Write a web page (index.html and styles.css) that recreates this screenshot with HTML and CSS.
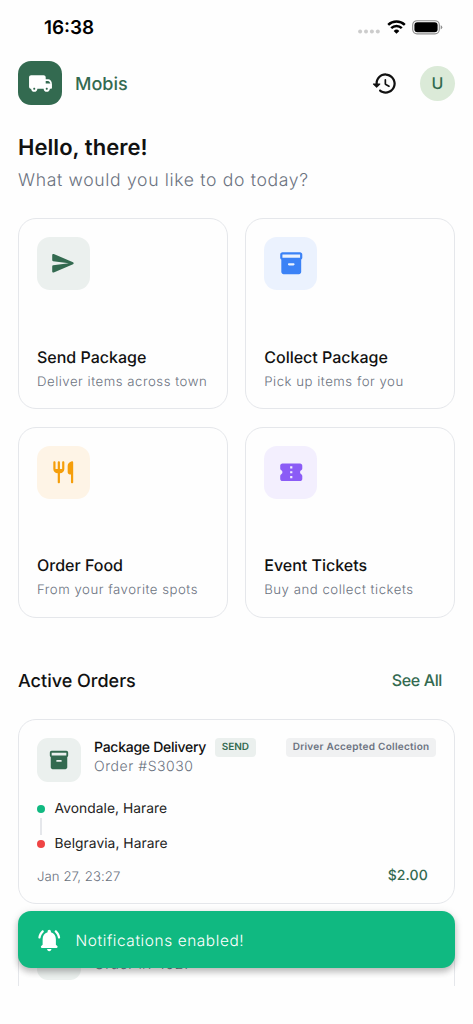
FILE: index.html
```html
<!DOCTYPE html>
<html lang="en">
<head>
<meta charset="utf-8">
<title>Mobis</title>
<link rel="stylesheet" href="styles.css">
</head>
<body>
<svg class="defs" width="0" height="0">
  <symbol id="box" viewBox="0 0 24 24"><path d="M20 2H4c-1 0-2 .9-2 2v3.01c0 .72.43 1.34 1 1.69V20c0 1.1 1.1 2 2 2h14c.9 0 2-.9 2-2V8.7c.57-.35 1-.97 1-1.69V4c0-1.1-1-2-2-2zm-6 12h-4c-.55 0-1-.45-1-1s.45-1 1-1h4c.55 0 1 .45 1 1s-.45 1-1 1zm6-7H4V4h16v3z"/></symbol>
</svg>
<div class="screen">
  <div class="statusbar">
    <span class="clock">16:38</span>
    <div class="indicators">
      <svg class="signal" width="22" height="5" viewBox="0 0 22 5"><circle cx="2.1" cy="2.5" r="2"/><circle cx="8" cy="2.5" r="2"/><circle cx="13.9" cy="2.5" r="2"/><circle cx="19.8" cy="2.5" r="2"/></svg>
      <svg class="wifi" width="19" height="14.2" viewBox="0 0 20 15" fill="none" stroke="#000" stroke-width="2.6"><path class="arc" d="M1.2 5.2a12.6 12.6 0 0 1 17.6 0"/><path class="arc" d="M4.4 8.6a8 8 0 0 1 11.2 0"/><path d="M10 14.6l-3-3.1a4.3 4.3 0 0 1 6 0z" fill="#000" stroke="none"/></svg>
      <svg class="battery" width="31" height="15" viewBox="0 0 31 15"><rect x=".7" y=".7" width="26.6" height="13.2" rx="4.3" class="arc" stroke="#8e8e8e" stroke-width="1.1"/><rect x="2.4" y="2.3" width="23.2" height="10" rx="3" fill="#000"/><path d="M28.7 5.2q1.6.6 1.6 2.1t-1.6 2.1z" fill="#8e8e8e"/></svg>
    </div>
  </div>

  <header class="topbar">
    <div class="logo"><svg width="25" height="25" viewBox="0 0 24 24"><path d="M19.5 8H17V6c0-1.1-.9-2-2-2H3c-1.1 0-2 .9-2 2v9c0 1.1.9 2 2 2 0 1.66 1.34 3 3 3s3-1.34 3-3h6c0 1.66 1.34 3 3 3s3-1.34 3-3h1c.55 0 1-.45 1-1v-3.33c0-3-2-4.67-3.5-4.67zM6 18c-.55 0-1-.45-1-1s.45-1 1-1 1 .45 1 1-.45 1-1 1zm13.2-8.5c1 0 1.8 1.1 2.26 2.5H17V9.5h2.2zM18 18c-.55 0-1-.45-1-1s.45-1 1-1 1 .45 1 1-.45 1-1 1z"/></svg></div>
    <span class="brand">Mobis</span>
    <svg class="history" width="27" height="27" viewBox="0 0 24 24"><path d="M13.26 3C8.17 2.86 4 6.95 4 12H2.21c-.45 0-.67.54-.35.85l2.79 2.8c.2.2.51.2.71 0l2.79-2.8c.31-.31.09-.85-.36-.85H6c0-3.9 3.18-7.05 7.1-7 3.72.05 6.85 3.18 6.9 6.9.05 3.91-3.1 7.1-7 7.1-1.61 0-3.1-.55-4.28-1.48-.4-.31-.96-.28-1.32.08-.42.43-.39 1.13.08 1.5C9 20.29 10.91 21 13 21c5.05 0 9.14-4.17 9-9.26-.13-4.69-4.05-8.61-8.74-8.74zm-.51 5c-.41 0-.75.34-.75.75v3.68c0 .35.19.68.49.86l3.12 1.85c.36.21.82.09 1.03-.26.21-.36.09-.82-.26-1.03l-2.88-1.71v-3.4c0-.4-.34-.74-.75-.74z"/></svg>
    <div class="avatar">U</div>
  </header>

  <section class="greeting">
    <h1>Hello, there!</h1>
    <p>What would you like to do today?</p>
  </section>

  <section class="services">
    <article class="service send">
      <div class="tile"><svg width="26.5" height="26.5" viewBox="0 0 24 24"><path d="M3.4 20.4l17.45-7.48c.81-.35.81-1.49 0-1.84L3.4 3.6c-.66-.29-1.39.2-1.39.91L2 9.12c0 .5.37.93.87.99L17 12 2.87 13.88c-.5.07-.87.5-.87 1l.01 4.61c0 .71.73 1.2 1.39.91z"/></svg></div>
      <h2>Send Package</h2>
      <p>Deliver items across town</p>
    </article>
    <article class="service collect">
      <div class="tile"><svg width="26.5" height="26.5"><use href="#box"/></svg></div>
      <h2>Collect Package</h2>
      <p>Pick up items for you</p>
    </article>
    <article class="service food">
      <div class="tile"><svg width="26.5" height="26.5" viewBox="0 0 24 24"><path d="M16 6v6c0 1.1.9 2 2 2h1v7c0 .55.45 1 1 1s1-.45 1-1V3.13c0-.65-.61-1.13-1.24-.98C17.6 2.68 16 4.51 16 6zm-5 3H9V3c0-.55-.45-1-1-1s-1 .45-1 1v6H5V3c0-.55-.45-1-1-1s-1 .45-1 1v6c0 2.21 1.79 4 4 4v8c0 .55.45 1 1 1s1-.45 1-1v-8c2.21 0 4-1.79 4-4V3c0-.55-.45-1-1-1s-1 .45-1 1v6z"/></svg></div>
      <h2>Order Food</h2>
      <p>From your favorite spots</p>
    </article>
    <article class="service tickets">
      <div class="tile"><svg width="26.5" height="26.5" viewBox="0 0 24 24"><path d="M20 12c0-.76.43-1.42 1.06-1.76.6-.33.94-1.01.94-1.7V6c0-1.1-.9-2-2-2H4c-1.1 0-1.99.89-1.99 1.99v2.55c0 .69.33 1.37.94 1.69C3.58 10.58 4 11.24 4 12s-.43 1.43-1.06 1.76c-.6.33-.94 1.01-.94 1.7V18c0 1.1.9 2 2 2h16c1.1 0 2-.9 2-2v-2.54c0-.69-.34-1.37-.94-1.7-.63-.34-1.06-1-1.06-1.76zm-7 5.5h-2v-2h2v2zm0-4.5h-2v-2h2v2zm0-4.5h-2v-2h2v2z"/></svg></div>
      <h2>Event Tickets</h2>
      <p>Buy and collect tickets</p>
    </article>
  </section>

  <div class="section-head">
    <h2>Active Orders</h2>
    <a class="see-all">See All</a>
  </div>

  <section class="orders">
    <article class="order">
      <div class="order-head">
        <div class="order-tile"><svg width="22" height="22"><use href="#box"/></svg></div>
        <div class="order-info">
          <div class="order-line">
            <span class="order-name">Package Delivery</span>
            <span class="badge kind">SEND</span>
            <span class="badge state">Driver Accepted Collection</span>
          </div>
          <span class="order-id">Order #S3030</span>
        </div>
      </div>
      <div class="route">
        <div class="stop from"><i></i><span>Avondale, Harare</span></div>
        <div class="link"></div>
        <div class="stop to"><i></i><span>Belgravia, Harare</span></div>
      </div>
      <div class="order-foot"><span class="date">Jan 27, 23:27</span><span class="price">$2.00</span></div>
    </article>
    <article class="order">
      <div class="order-head">
        <div class="order-tile"></div>
        <div class="order-info">
          <div class="order-line"></div>
          <span class="order-id">Order #F4927</span>
        </div>
      </div>
    </article>
  </section>

  <div class="toast">
    <svg width="26.5" height="26.5" viewBox="0 0 24 24"><path d="M12 22c1.1 0 2-.9 2-2h-4c0 1.1.9 2 2 2zm6-6v-5c0-3.07-1.63-5.64-4.5-6.32V4c0-.83-.67-1.5-1.5-1.5s-1.5.67-1.5 1.5v.68C7.64 5.36 6 7.92 6 11v5l-1.3 1.29c-.63.63-.19 1.71.7 1.71h13.17c.89 0 1.34-1.08.71-1.71L18 16zM6.77 4.73c.42-.38.43-1.03.03-1.43-.38-.38-1-.39-1.39-.02C3.7 4.84 2.52 6.96 2.14 9.34c-.09.61.38 1.16 1 1.16.48 0 .9-.35.98-.83.3-1.94 1.26-3.67 2.65-4.94zM18.6 3.28c-.4-.37-1.02-.36-1.4.02-.4.4-.38 1.04.03 1.42 1.38 1.27 2.35 3 2.65 4.94.07.48.49.83.98.83.61 0 1.09-.55.99-1.16-.38-2.37-1.55-4.48-3.25-6.05z"/></svg>
    <span>Notifications enabled!</span>
  </div>
</div>
</body>
</html>
```
FILE: styles.css
```css
* { box-sizing: border-box; }
body { margin: 0; background: #fefefe; font-family: Inter, "Liberation Sans", sans-serif; color: #111; text-rendering: geometricPrecision; }
h1, h2, p { margin: 0; white-space: nowrap; }
svg { display: block; flex: none; fill: currentColor; }
.defs { position: absolute; }
.screen { position: relative; width: 473px; height: 1024px; overflow: hidden; padding: 0 18px; display: flex; flex-direction: column; }

.statusbar { height: 61px; flex: none; display: flex; justify-content: space-between; padding: 16px 12px 0 26px; }
.clock { padding-top: 1px; font-size: 18.9px; line-height: 22px; font-weight: 600; color: #000; }
.indicators { display: flex; align-items: flex-start; padding-top: 3px; }
.signal { margin-top: 10px; color: #ccc; }
.wifi { margin: 1px 0 0 7px; }
.arc { fill: none; }
.battery { margin: 1px 0 0 6px; }

.topbar { height: 44px; flex: none; display: flex; align-items: center; }
.logo { width: 44px; height: 44px; border-radius: 13px; background: #336a50; color: #fff; display: grid; place-items: center; }
.brand { margin-left: 13px; padding-top: 4px; font-size: 18px; line-height: 24px; font-weight: 500; color: #336a50; }
.history { margin-left: auto; color: #111; }
.avatar { width: 35px; height: 35px; margin-left: 22px; border-radius: 50%; background: #dbead8; color: #336a50; display: grid; place-items: center; font-size: 16px; font-weight: 500; }

.greeting { padding-top: 28px; flex: none; }
.greeting h1 { font-size: 22px; line-height: 30px; font-weight: 600; letter-spacing: .05px; }
.greeting p { margin-top: 5px; font-size: 17.6px; line-height: 26px; font-weight: 300; color: #6b7280; letter-spacing: .66px; }

.services { margin-top: 24px; display: grid; grid-template-columns: 1fr 1fr; gap: 17.5px; flex: none; }
.service { height: 191px; border: 1px solid #e5e7eb; border-radius: 18px; padding: 18px 18px 16.7px; display: flex; flex-direction: column; }
.tile { width: 53px; height: 53px; border-radius: 13px; display: grid; place-items: center; }
.service h2 { margin-top: auto; font-size: 16px; line-height: 22px; font-weight: 500; }
.service p { margin-top: 5px; font-size: 13.2px; line-height: 18px; color: #6b7280; letter-spacing: .52px; font-weight: 300; }
.food, .tickets { padding-bottom: 17.5px; }
.send .tile { background: #ebf0ee; color: #336a50; }
.collect .tile { background: #ebf2fe; color: #3b82f6; }
.food .tile { background: #fef4e6; color: #f59e0b; }
.tickets .tile { background: #f3effe; color: #8b5cf6; }

.section-head { margin-top: 48.5px; height: 28px; flex: none; display: flex; justify-content: space-between; align-items: center; padding-right: 13px; }
.section-head h2 { padding-top: 2px; font-size: 18px; font-weight: 500; }
.see-all { font-size: 16px; font-weight: 500; color: #336a50; letter-spacing: -.35px; }

.orders { margin-top: 25px; height: 267px; flex: none; overflow: hidden; display: flex; flex-direction: column; gap: 13px; }
.order { height: 185px; flex: none; border: 1px solid #e5e7eb; border-radius: 18px; padding: 18px; display: flex; flex-direction: column; }
.order-head { display: flex; gap: 13px; }
.order-tile { width: 44px; height: 44px; flex: none; border-radius: 11px; background: #ebf0ee; color: #336a50; display: grid; place-items: center; }
.order-info { flex: 1; }
.order-line { height: 19px; display: flex; align-items: center; white-space: nowrap; }
.order-name { font-size: 14px; font-weight: 500; letter-spacing: -.27px; }
.order-id { display: block; padding-top: 1px; font-size: 14px; line-height: 18px; font-weight: 300; color: #6b7280; letter-spacing: .55px; }
.badge { height: 19px; line-height: 19px; padding: 0 6.5px; border-radius: 4px; font-size: 10px; font-weight: 600; }
.kind { margin-left: 9px; background: #ebf0ee; color: #336a50; }
.state { margin-left: auto; background: #f0f1f2; color: #6b7280; letter-spacing: .27px; }
.route { margin-top: 17px; }
.stop { height: 20px; display: flex; align-items: center; gap: 9.5px; font-size: 13.8px; color: #222; letter-spacing: .05px; }
.stop i { width: 8px; height: 8px; border-radius: 50%; background: #10b981; }
.stop.to i { background: #ef4444; }
.link { width: 2px; height: 17px; margin: -1px 0 -1px 3px; background: #e5e7eb; }
.order-foot { margin-top: 11px; display: flex; justify-content: space-between; line-height: 22px; padding-right: 8px; }
.date { padding-top: 1px; font-size: 13.2px; font-weight: 300; color: #6b7280; letter-spacing: .05px; }
.price { font-size: 14px; font-weight: 500; color: #336a50; letter-spacing: .15px; }

.toast { position: absolute; left: 18px; top: 911px; width: 437px; height: 57px; border-radius: 13px; background: #10b981; color: #fff; display: flex; align-items: center; gap: 13px; padding: 1px 0 0 18px; font-size: 15.4px; font-weight: 300; letter-spacing: .6px; box-shadow: 0 4px 6px rgba(0,0,0,.2), 0 2px 10px rgba(0,0,0,.12); }
```
